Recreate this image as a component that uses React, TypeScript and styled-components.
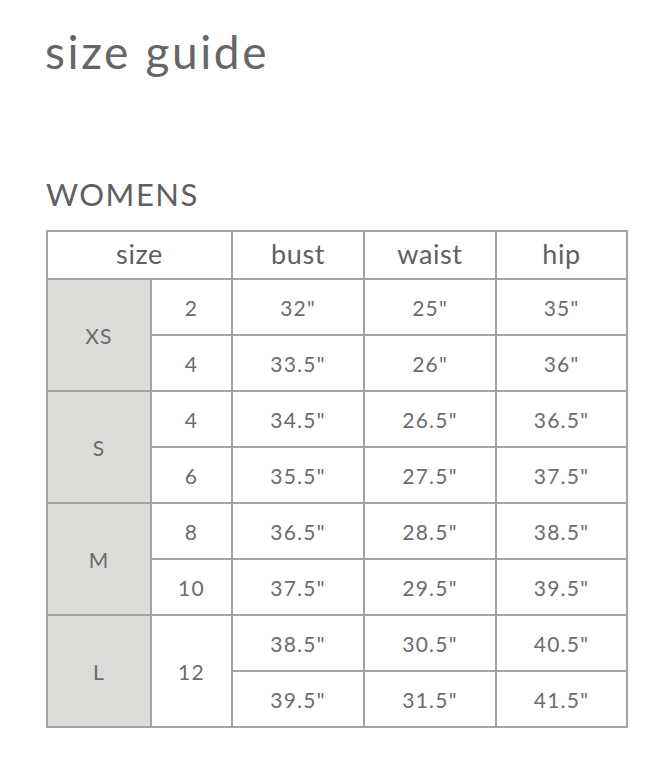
import React from "react";
import styled, { createGlobalStyle } from "styled-components";

const Global = createGlobalStyle`
  html, body { margin: 0; padding: 0; background: #fff; }
  body { font-family: Lato, "Open Sans", sans-serif; color: #666; }
`;

const Page = styled.div`
  padding: 22px 0 0 45px;
  width: 656px;
  box-sizing: border-box;
`;

const Title = styled.h1`
  margin: 0;
  font-family: Lato, sans-serif;
  font-weight: 400;
  font-size: 46px;
  line-height: 60px;
  letter-spacing: 2.6px;
  color: #666;
`;

const Section = styled.h2`
  margin: 94px 0 0 1px;
  font-family: Lato, sans-serif;
  font-weight: 400;
  font-size: 31px;
  line-height: 36px;
  letter-spacing: 1.5px;
  color: #5f5f5f;
`;

const Table = styled.table`
  margin: 18px 0 0 1px;
  border-collapse: collapse;
  table-layout: fixed;
  width: 580px;
  font-family: Lato, sans-serif;
  color: #666;
`;

const Head = styled.th`
  height: 42px;
  border: 2px solid #a3a3a3;
  font-weight: 400;
  font-size: 27px;
  letter-spacing: 0.6px;
  text-align: center;
  vertical-align: middle;
  padding: 0 0 4px 0;
  color: #606060;
`;

const Cell = styled.td<{ $shade?: boolean }>`
  height: 54px;
  border: 2px solid #a3a3a3;
  background: ${(p) => (p.$shade ? "#dcdcd8" : "#fff")};
  font-size: 21px;
  letter-spacing: 1.2px;
  text-align: center;
  vertical-align: middle;
  padding: 0;
  color: #6c6c6c;
`;

type Row = { n: string; m: string[] };
type Group = { size: string; rows: Row[]; spanNum?: boolean };

const groups: Group[] = [
  { size: "XS", rows: [{ n: "2", m: ['32"', '25"', '35"'] }, { n: "4", m: ['33.5"', '26"', '36"'] }] },
  { size: "S", rows: [{ n: "4", m: ['34.5"', '26.5"', '36.5"'] }, { n: "6", m: ['35.5"', '27.5"', '37.5"'] }] },
  { size: "M", rows: [{ n: "8", m: ['36.5"', '28.5"', '38.5"'] }, { n: "10", m: ['37.5"', '29.5"', '39.5"'] }] },
  { size: "L", spanNum: true, rows: [{ n: "12", m: ['38.5"', '30.5"', '40.5"'] }, { n: "12", m: ['39.5"', '31.5"', '41.5"'] }] },
];

export default function App() {
  return (
    <>
      <Global />
      <Page>
        <Title>size guide</Title>
        <Section>WOMENS</Section>
        <Table>
          <colgroup>
            <col style={{ width: 104 }} />
            <col style={{ width: 81 }} />
            <col style={{ width: 132 }} />
            <col style={{ width: 132 }} />
            <col style={{ width: 131 }} />
          </colgroup>
          <thead>
            <tr>
              <Head colSpan={2}>size</Head>
              <Head>bust</Head>
              <Head>waist</Head>
              <Head>hip</Head>
            </tr>
          </thead>
          <tbody>
            {groups.map((g) =>
              g.rows.map((r, i) => (
                <tr key={g.size + i}>
                  {i === 0 && (
                    <Cell $shade rowSpan={2}>
                      {g.size}
                    </Cell>
                  )}
                  {g.spanNum ? (i === 0 ? <Cell rowSpan={2}>{r.n}</Cell> : null) : <Cell>{r.n}</Cell>}
                  {r.m.map((v, k) => (
                    <Cell key={k}>{v}</Cell>
                  ))}
                </tr>
              ))
            )}
          </tbody>
        </Table>
      </Page>
    </>
  );
}
